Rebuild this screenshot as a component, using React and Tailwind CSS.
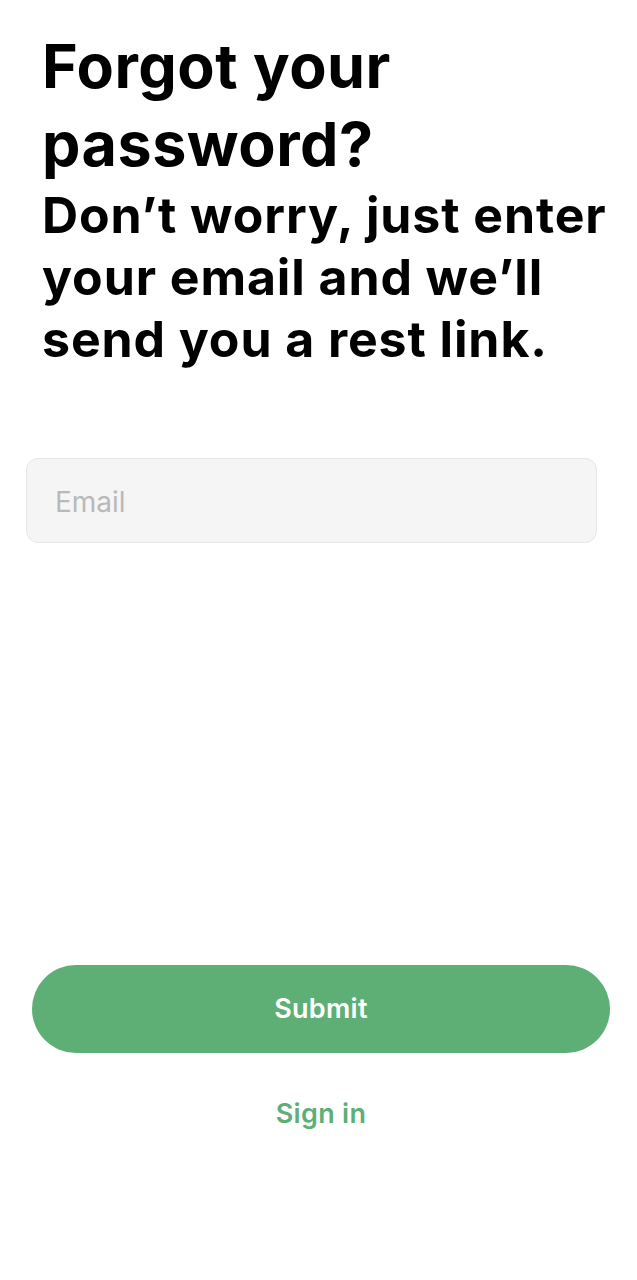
export default function App() {
  return (
    <div className="min-h-[1280px] w-[637px] bg-white" style={{ fontFamily: "Inter, 'Noto Sans', sans-serif" }}>
      <div className="pt-[27px] pl-[42px] pr-[20px]">
        <h1 className="text-[61px] leading-[78px] font-bold text-black tracking-[0.5px]">
          Forgot your
          <br />
          password?
        </h1>
        <p className="mt-[1px] text-[50px] leading-[62px] font-bold text-black tracking-[0.9px]">
          Don’t worry, just enter your email and we’ll send you a rest link.
        </p>
      </div>
      <div className="mt-[88px] ml-[26px] w-[571px]">
        <input
          type="email"
          placeholder="Email"
          className="h-[85px] w-full rounded-[12px] border border-[#e6e6e6] bg-[#f5f5f5] pl-[28px] pt-[3px] text-[28px] text-black outline-none placeholder:text-[#b9b9b9]"
        />
      </div>
      <div className="mt-[422px] ml-[32px] w-[578px]">
        <button className="flex h-[88px] w-full items-center justify-center rounded-full bg-[#5daf75] text-[27px] font-semibold tracking-[0.3px] text-white">
          Submit
        </button>
        <div className="mt-[41px] flex justify-center">
          <span className="text-[27px] font-semibold tracking-[0.3px] text-[#5daf75]">Sign in</span>
        </div>
      </div>
    </div>
  );
}
